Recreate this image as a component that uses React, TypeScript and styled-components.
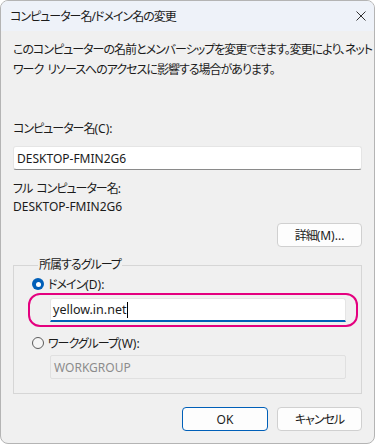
import React from "react";
import styled, { createGlobalStyle } from "styled-components";

const Global = createGlobalStyle`
  html, body { margin: 0; padding: 0; background: #ffffff; }
  body {
    font-family: "Noto Sans", "Noto Sans CJK JP", sans-serif;
    font-size: 12px;
    color: #1b1b1b;
    font-feature-settings: "palt";
    letter-spacing: -1px;
  }
  * { box-sizing: border-box; }
`;

const Window = styled.div`
  width: 375px;
  height: 444px;
  border: 1px solid #b4b4b4;
  border-radius: 8px;
  overflow: hidden;
  background: #f0f0f0;
  display: flex;
  flex-direction: column;
`;

const TitleBar = styled.div`
  height: 30px;
  background: #eef2f9;
  display: flex;
  align-items: center;
  justify-content: space-between;
  padding: 0 8px 0 9px;
  flex-shrink: 0;
`;

const Title = styled.span`
  font-size: 12px;
  color: #1b1b1b;
`;

const Close = styled.div`
  width: 10px;
  height: 10px;
  display: flex;
`;

const Body = styled.div`
  padding: 0 12px;
  display: flex;
  flex-direction: column;
`;

const Desc = styled.div`
  margin-top: 9px;
  line-height: 20px;
  white-space: nowrap;
`;

const Latin = styled.span`
  letter-spacing: 0;
`;

const Space = styled.span`
  display: inline-block;
  width: 4px;
`;

const Label = styled.div<{ $mt: number; $lh?: number }>`
  margin-top: ${(p) => p.$mt}px;
  line-height: ${(p) => p.$lh ?? 18}px;
  white-space: nowrap;
`;

const TextBox = styled.div`
  margin-top: 7px;
  height: 24px;
  background: #ffffff;
  border: 1px solid #e5e5e5;
  border-bottom: 1px solid #8a8a8a;
  border-radius: 3px;
  display: flex;
  align-items: center;
  padding-left: 3px;
  letter-spacing: 0;
`;

const ButtonRow = styled.div<{ $mt: number; $gap?: number }>`
  margin-top: ${(p) => p.$mt}px;
  display: flex;
  justify-content: flex-end;
  gap: ${(p) => p.$gap ?? 0}px;
`;

const Button = styled.button<{ $w: number; $primary?: boolean }>`
  width: ${(p) => p.$w}px;
  height: 24px;
  font: inherit;
  letter-spacing: inherit;
  color: #1b1b1b;
  background: #fdfdfd;
  border: 1px solid ${(p) => (p.$primary ? "#005fb8" : "#d0d0d0")};
  border-radius: 4px;
  padding: 0;
  display: flex;
  align-items: center;
  justify-content: center;
`;

const Group = styled.fieldset`
  margin: 9px 0 0 0;
  padding: 0 15px 14px 18px;
  border: 1px solid #d6d6d6;
  min-width: 0;
`;

const Legend = styled.legend`
  padding: 0 1px;
  margin-left: 6px;
  line-height: 18px;
`;

const RadioRow = styled.label<{ $mt: number }>`
  margin-top: ${(p) => p.$mt}px;
  height: 18px;
  display: flex;
  align-items: center;
  gap: 4px;
  white-space: nowrap;
`;

const RadioDot = styled.span<{ $on?: boolean }>`
  width: 12px;
  height: 12px;
  border-radius: 50%;
  flex-shrink: 0;
  background: ${(p) => (p.$on ? "#005fb8" : "#f5f5f5")};
  border: ${(p) => (p.$on ? "none" : "1px solid #5c5c5c")};
  display: flex;
  align-items: center;
  justify-content: center;
  &::after {
    content: "";
    display: ${(p) => (p.$on ? "block" : "none")};
    width: 5px;
    height: 5px;
    border-radius: 50%;
    background: #ffffff;
  }
`;

const DomainWrap = styled.div`
  position: relative;
  margin: 5px 0 0 18px;
`;

const DomainBox = styled.div`
  height: 24px;
  background: #ffffff;
  border: 1px solid #e5e5e5;
  border-bottom: 2px solid #005fb8;
  border-radius: 3px 3px 0 0;
  display: flex;
  align-items: center;
  padding-left: 2px;
  font-size: 12.5px;
  letter-spacing: 0;
`;

const Caret = styled.span`
  display: inline-block;
  width: 1px;
  height: 16px;
  background: #000;
  margin-left: 1px;
`;

const Highlight = styled.div`
  position: absolute;
  left: -22px;
  top: -5px;
  width: 330px;
  height: 34px;
  border: 2px solid #e4007f;
  border-radius: 12px;
  pointer-events: none;
`;

const DisabledBox = styled.div`
  margin: 3px 0 0 18px;
  height: 24px;
  background: #f0f0f0;
  border: 1px solid #e0e0e0;
  border-radius: 2px;
  display: flex;
  align-items: center;
  padding-left: 3px;
  color: #8c8c8c;
  letter-spacing: 0;
`;

export default function App() {
  return (
    <>
      <Global />
      <Window>
        <TitleBar>
          <Title>コンピューター名/ドメイン名の変更</Title>
          <Close>
            <svg width="10" height="10" viewBox="0 0 10 10">
              <path d="M0.5 0.5 L9.5 9.5 M9.5 0.5 L0.5 9.5" stroke="#1b1b1b" strokeWidth="0.9" />
            </svg>
          </Close>
        </TitleBar>
        <Body>
          <Desc>
            このコンピューターの名前とメンバーシップを変更できます。変更により、ネット
            <br />
            ワーク<Space> </Space>リソースへのアクセスに影響する場合があります。
          </Desc>
          <Label $mt={39} $lh={20}>
            コンピューター名<Latin>(C):</Latin>
          </Label>
          <TextBox>DESKTOP-FMIN2G6</TextBox>
          <Label $mt={10}>
            フル<Space> </Space>コンピューター名:
          </Label>
          <Label $mt={0}>
            <Latin>DESKTOP-FMIN2G6</Latin>
          </Label>
          <ButtonRow $mt={7}>
            <Button $w={85}>
              詳細<Latin>(M)...</Latin>
            </Button>
          </ButtonRow>
          <Group>
            <Legend>所属するグループ</Legend>
            <RadioRow $mt={1}>
              <RadioDot $on />
              <span>
                ドメイン<Latin>(D):</Latin>
              </span>
            </RadioRow>
            <DomainWrap>
              <DomainBox>
                yellow.in.net
                <Caret />
              </DomainBox>
              <Highlight />
            </DomainWrap>
            <RadioRow $mt={12}>
              <RadioDot />
              <span>
                ワークグループ<Latin>(W):</Latin>
              </span>
            </RadioRow>
            <DisabledBox>WORKGROUP</DisabledBox>
          </Group>
          <ButtonRow $mt={13} $gap={9}>
            <Button $w={86} $primary>
              <Latin>OK</Latin>
            </Button>
            <Button $w={85}>キャンセル</Button>
          </ButtonRow>
        </Body>
      </Window>
    </>
  );
}
